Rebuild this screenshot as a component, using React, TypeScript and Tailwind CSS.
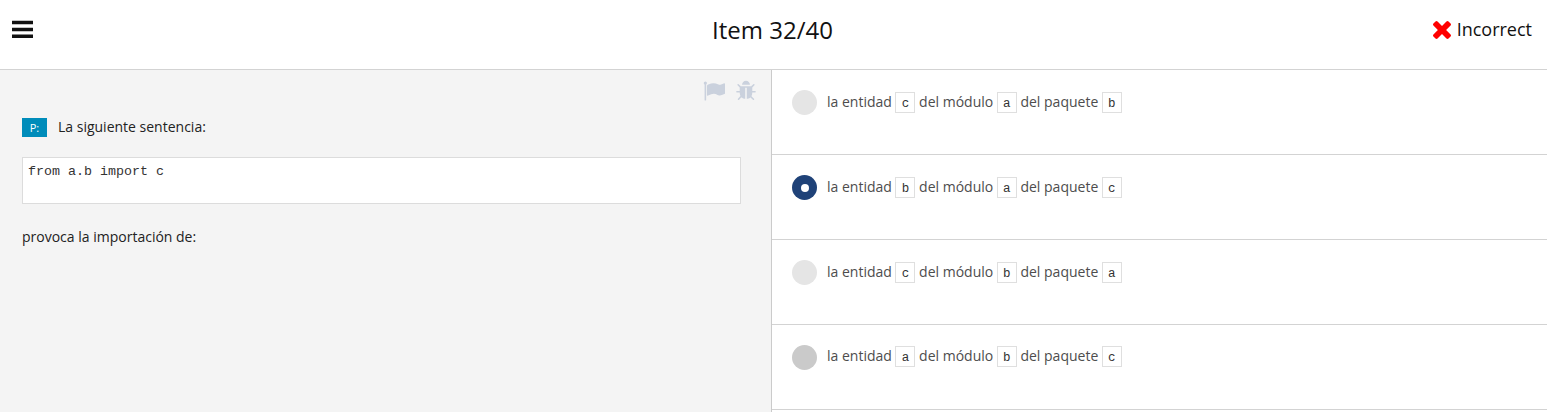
import React from "react";

const options = [
  { parts: ["c", "a", "b"], dot: "bg-[#e5e5e5]", selected: false, text: "mt-[20px]" },
  { parts: ["b", "a", "c"], dot: "bg-[#1f4278]", selected: true, text: "mt-[20px]" },
  { parts: ["c", "b", "a"], dot: "bg-[#e5e5e5]", selected: false, text: "mt-[20px]" },
  { parts: ["a", "b", "c"], dot: "bg-[#cacaca]", selected: false, text: "mt-[19px]" },
];

function Code({ children }: { children: React.ReactNode }) {
  return (
    <code className="mx-[3.64px] mt-[2px] flex h-[21px] w-[20px] shrink-0 justify-center border border-[#dfdfdf] bg-white font-['Liberation_Mono','Courier_New',monospace] text-[12.5px] leading-[22px] text-[#333]">
      {children}
    </code>
  );
}

export default function App() {
  return (
    <div className="flex h-[412px] flex-col overflow-hidden bg-white font-['Open_Sans',sans-serif] text-[14px] text-[#222]">
      <header className="grid h-[70px] shrink-0 grid-cols-[1fr_auto_1fr] border-b border-[#d3d3d3] text-[#111]">
        <svg className="mt-[20px] ml-[12px] h-[18px] w-[21px]" viewBox="0 0 21 18" fill="#111">
          <rect y="0.7" width="21" height="3.6" rx="0.2" />
          <rect y="7.7" width="21" height="3.6" rx="0.2" />
          <rect y="14.4" width="21" height="3.6" rx="0.2" />
        </svg>
        <h1 className="mt-[13px] mr-[2px] text-[24px] leading-[33px]">Item 32/40</h1>
        <div className="mt-[17px] mr-[15px] flex justify-end text-[18px] leading-[25px]">
          <svg className="mt-[3.5px] mr-[6px] h-[18px] w-[18px]" viewBox="302 366 1188 1188" fill="#f00">
            <path d="M1490 1322q0 40-28 68l-136 136q-28 28-68 28t-68-28l-294-294-294 294q-28 28-68 28t-68-28l-136-136q-28-28-28-68t28-68l294-294-294-294q-28-28-28-68t28-68l136-136q28-28 68-28t68 28l294 294 294-294q28-28 68-28t68 28l136 136q28 28 28 68t-28 68l-294 294 294 294q28 28 28 68z" />
          </svg>
          Incorrect
        </div>
      </header>
      <main className="flex min-h-0 flex-1">
        <section className="w-[772px] shrink-0 border-r border-[#cbcbcb] bg-[#f4f4f4] pl-[22px]">
          <div className="flex h-[48px] justify-end gap-[11px] pt-[10px] pr-[15px]">
            <svg className="h-[22px] w-[22px]" viewBox="0 0 1792 1792" fill="#cad1dd">
              <path d="M320 256q0 72-64 110v1266q0 13-9.5 22.5t-22.5 9.5h-64q-13 0-22.5-9.5t-9.5-22.5v-1266q-64-38-64-110 0-53 37.5-90.5t90.5-37.5 90.5 37.5 37.5 90.5zm1472 64v763q0 25-12.5 38.5t-39.5 27.5q-215 116-369 116-61 0-123.5-22t-108.5-48-115.5-48-142.5-22q-192 0-464 146-17 9-33 9-26 0-45-19t-19-45v-742q0-32 31-55 21-14 79-43 236-120 421-120 107 0 200 29t219 88q38 19 88 19 54 0 117.5-21t110-47 88-47 54.5-21q26 0 45 19t19 45z" />
            </svg>
            <svg className="h-[22px] w-[20px]" viewBox="82 0 1629 1792" fill="#cad1dd">
              <path d="M1696 960q0 26-19 45t-45 19h-224q0 171-67 290l208 209q19 19 19 45t-19 45q-18 19-45 19t-45-19l-198-197q-5 5-15 13t-42 28.5-65 36.5-82 29-97 13v-896h-128v896q-51 0-101.5-13.5t-87-33-66-39-43.5-32.5l-15-14-183 207q-20 21-48 21-24 0-43-16-19-18-20.5-44.5t15.5-46.5l202-227q-58-114-58-274h-224q-26 0-45-19t-19-45 19-45 45-19h224v-294l-173-173q-19-19-19-45t19-45 45-19 45 19l173 173h844l173-173q19-19 45-19t45 19 19 45-19 45l-173 173v294h224q26 0 45 19t19 45zm-480-576h-640q0-133 93.5-226.5t226.5-93.5 226.5 93.5 93.5 226.5z" />
            </svg>
          </div>
          <div className="flex h-[19px] gap-[11px]">
            <span className="h-[19px] w-[25px] bg-[#008cba] text-center text-[11px] leading-[20px] text-white">P:</span>
            <span className="leading-[18px]">La siguiente sentencia:</span>
          </div>
          <pre className="mt-[20px] h-[47px] w-[719px] border border-[#dcdcdc] bg-white pt-[4px] pl-[5px] font-['Liberation_Mono','Courier_New',monospace] text-[13.33px] leading-[19px] text-[#333]">
            from a.b import c
          </pre>
          <p className="mt-[23px] leading-[20px]">provoca la importación de:</p>
        </section>
        <section className="flex-1">
          {options.map((o, i) => (
            <div key={i} className="flex h-[85px] border-b border-[#d3d3d3] pl-[20px] text-[#4d4d4d]">
              <span className={`mt-[20px] flex h-[25px] w-[25px] items-center justify-center rounded-full ${o.dot}`}>
                {o.selected && <span className="h-[8px] w-[8px] rounded-full bg-white" />}
              </span>
              <div className={`ml-[10px] flex h-[24px] leading-[24px] whitespace-nowrap ${o.text}`}>
                <span>la entidad</span>
                <Code>{o.parts[0]}</Code>
                <span>del módulo</span>
                <Code>{o.parts[1]}</Code>
                <span>del paquete</span>
                <Code>{o.parts[2]}</Code>
              </div>
            </div>
          ))}
        </section>
      </main>
    </div>
  );
}
